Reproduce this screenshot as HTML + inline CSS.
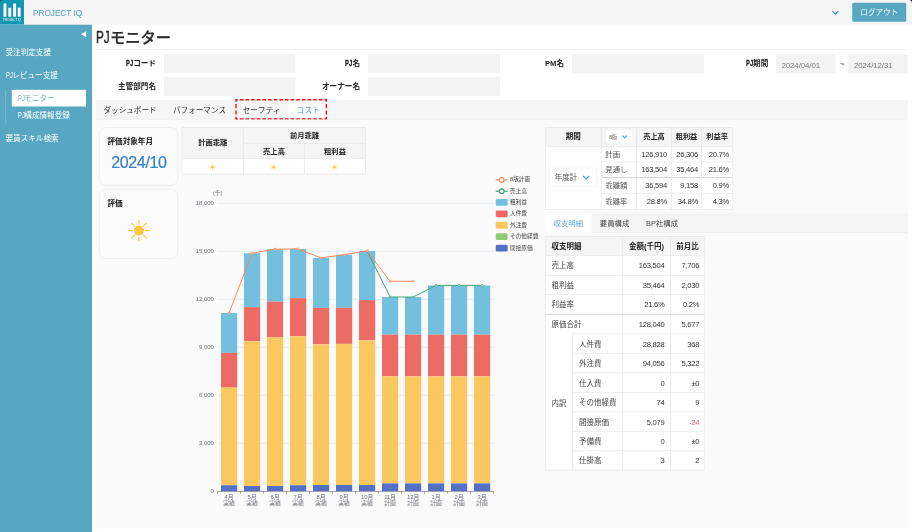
<!DOCTYPE html>
<html lang="ja"><head><meta charset="utf-8"><title>PJモニター</title>
<style>
html,body{margin:0;padding:0;background:#fff;}
body{width:912px;height:532px;position:relative;overflow:hidden;font-family:"Liberation Sans", "Noto Sans CJK JP", sans-serif;}
svg.bg{position:absolute;left:0;top:0;display:block;font-family:"Liberation Sans", "Noto Sans CJK JP", sans-serif;will-change:transform;}
#tx{position:absolute;left:0;top:0;width:912px;height:532px;will-change:transform;}
.t{position:absolute;white-space:nowrap;margin:0;}
.b .pj{-webkit-text-stroke:0.3px currentColor;}
.pj{display:inline-block;line-height:0;font-size:1.1em;transform:scaleX(0.7);transform-origin:0 50%;margin-right:-0.35em;}
</style></head><body>
<svg class="bg" width="912" height="532" viewBox="0 0 912 532">
<rect x="0" y="0" width="912" height="24.7" fill="#f5f5f5"/>
<rect x="0" y="0" width="24" height="24.7" fill="#1396b3"/>
<path d="M0 0 L2.4 0 A2.4 2.4 0 0 0 0 2.4 Z" fill="#333"/>
<rect x="3.5" y="3.5" width="2.9" height="13.2" fill="#fff"/>
<rect x="8.3" y="7.7" width="2.9" height="9" fill="#fff"/>
<rect x="13.2" y="3.5" width="2.9" height="13.2" fill="#fff"/>
<rect x="17.8" y="7.7" width="2.8" height="9" fill="#fff"/>
<text x="12.1" y="20.6" font-size="2.95" fill="#fff" text-anchor="middle">PROJECT IQ</text>
<path d="M832.3 11.1 L835.3 14.1 L838.3 11.1" fill="none" stroke="#3a9fd0" stroke-width="1.1"/>
<rect x="852.25" y="2.7" width="54.0" height="19.05" fill="#57a7c2" rx="1.5"/>
<path d="M908.8 0 L912 0 L912 3.4 A3.4 3.4 0 0 0 908.8 0 Z" fill="#2a2a2a"/>
<rect x="0" y="24.7" width="92" height="507.3" fill="#57a7c2"/>
<path d="M86.2 31.3 L86.2 37 L81 34.2 Z" fill="#fff"/>
<rect x="5.5" y="89.8" width="0.6" height="33.7" fill="#8fc3d8"/>
<rect x="11.8" y="89.8" width="74.2" height="16.7" fill="#fff"/>
<rect x="96" y="49.2" width="811.75" height="0.7" fill="#ececec"/>
<rect x="164" y="54.2" width="131.5" height="19.0" fill="#f3f3f3" rx="1.5"/>
<rect x="164" y="77.2" width="131.5" height="18.8" fill="#f3f3f3" rx="1.5"/>
<rect x="368" y="54.2" width="132" height="19.0" fill="#f3f3f3" rx="1.5"/>
<rect x="368" y="77.2" width="132" height="18.8" fill="#f3f3f3" rx="1.5"/>
<rect x="572" y="54.2" width="132" height="19.0" fill="#f3f3f3" rx="1.5"/>
<rect x="776" y="54.2" width="59.5" height="19.0" fill="#f3f3f3" rx="1.5"/>
<rect x="848.25" y="54.2" width="59.5" height="19.0" fill="#f3f3f3" rx="1.5"/>
<rect x="96" y="99.9" width="811.75" height="19.6" fill="#f5f5f5"/>
<rect x="96" y="119.2" width="811.75" height="0.6" fill="#e9e9e9"/>
<rect x="288.4" y="100.1" width="38.1" height="19.4" fill="#fff"/>
<path d="M236.0 99.75 L326.3 99.75" stroke="#ff0505" stroke-width="1.35" stroke-dasharray="3.556 2.088" stroke-dashoffset="1.778" fill="none"/>
<path d="M236.0 118.8 L326.3 118.8" stroke="#ff0505" stroke-width="1.35" stroke-dasharray="3.556 2.088" stroke-dashoffset="1.778" fill="none"/>
<path d="M236.0 99.75 L236.0 118.8" stroke="#ff0505" stroke-width="1.35" stroke-dasharray="4.064 2.286" stroke-dashoffset="2.032" fill="none"/>
<path d="M326.3 99.75 L326.3 118.8" stroke="#ff0505" stroke-width="1.35" stroke-dasharray="4.064 2.286" stroke-dashoffset="2.032" fill="none"/>
<rect x="235.32" y="99.08" width="1.35" height="1.35" fill="#ff0505"/>
<rect x="325.62" y="99.08" width="1.35" height="1.35" fill="#ff0505"/>
<rect x="235.32" y="118.12" width="1.35" height="1.35" fill="#ff0505"/>
<rect x="325.62" y="118.12" width="1.35" height="1.35" fill="#ff0505"/>
<rect x="96" y="119.8" width="811.75" height="407.95" fill="#fafafa"/>
<rect x="99.3" y="127.5" width="78.4" height="57.8" fill="#fbfbfb" rx="6.5" stroke="#e9e9e9" stroke-width="0.7"/>
<rect x="99.3" y="189.4" width="78.4" height="69.2" fill="#fbfbfb" rx="6.5" stroke="#e9e9e9" stroke-width="0.7"/>
<circle cx="138.9" cy="230.6" r="5" fill="#fcc743"/><line x1="145.30" y1="230.60" x2="149.10" y2="230.60" stroke="#fcc743" stroke-width="1.15" stroke-linecap="round"/><line x1="143.43" y1="235.13" x2="146.11" y2="237.81" stroke="#fcc743" stroke-width="1.15" stroke-linecap="round"/><line x1="138.90" y1="237.00" x2="138.90" y2="240.80" stroke="#fcc743" stroke-width="1.15" stroke-linecap="round"/><line x1="134.37" y1="235.13" x2="131.69" y2="237.81" stroke="#fcc743" stroke-width="1.15" stroke-linecap="round"/><line x1="132.50" y1="230.60" x2="128.70" y2="230.60" stroke="#fcc743" stroke-width="1.15" stroke-linecap="round"/><line x1="134.37" y1="226.07" x2="131.69" y2="223.39" stroke="#fcc743" stroke-width="1.15" stroke-linecap="round"/><line x1="138.90" y1="224.20" x2="138.90" y2="220.40" stroke="#fcc743" stroke-width="1.15" stroke-linecap="round"/><line x1="143.43" y1="226.07" x2="146.11" y2="223.39" stroke="#fcc743" stroke-width="1.15" stroke-linecap="round"/>
<rect x="182" y="127.5" width="183.5" height="31.25" fill="#f5f5f5"/>
<rect x="182" y="158.75" width="183.5" height="15.35" fill="#fff"/>
<rect x="182" y="127.15" width="183.5" height="0.7" fill="#e6e6e6"/>
<rect x="243.5" y="142.9" width="122.0" height="0.7" fill="#e6e6e6"/>
<rect x="182" y="158.4" width="183.5" height="0.7" fill="#e6e6e6"/>
<rect x="182" y="173.75" width="183.5" height="0.7" fill="#e6e6e6"/>
<rect x="181.65" y="127.5" width="0.7" height="46.6" fill="#e6e6e6"/>
<rect x="243.15" y="127.5" width="0.7" height="46.6" fill="#e6e6e6"/>
<rect x="304.15" y="143.25" width="0.7" height="30.85" fill="#e6e6e6"/>
<rect x="365.15" y="127.5" width="0.7" height="46.6" fill="#e6e6e6"/>
<circle cx="212.6" cy="167.0" r="1.6" fill="#fdc94f"/><line x1="214.80" y1="167.00" x2="215.90" y2="167.00" stroke="#fdc94f" stroke-width="0.5" stroke-linecap="round"/><line x1="214.16" y1="168.56" x2="214.93" y2="169.33" stroke="#fdc94f" stroke-width="0.5" stroke-linecap="round"/><line x1="212.60" y1="169.20" x2="212.60" y2="170.30" stroke="#fdc94f" stroke-width="0.5" stroke-linecap="round"/><line x1="211.04" y1="168.56" x2="210.27" y2="169.33" stroke="#fdc94f" stroke-width="0.5" stroke-linecap="round"/><line x1="210.40" y1="167.00" x2="209.30" y2="167.00" stroke="#fdc94f" stroke-width="0.5" stroke-linecap="round"/><line x1="211.04" y1="165.44" x2="210.27" y2="164.67" stroke="#fdc94f" stroke-width="0.5" stroke-linecap="round"/><line x1="212.60" y1="164.80" x2="212.60" y2="163.70" stroke="#fdc94f" stroke-width="0.5" stroke-linecap="round"/><line x1="214.16" y1="165.44" x2="214.93" y2="164.67" stroke="#fdc94f" stroke-width="0.5" stroke-linecap="round"/>
<circle cx="273.6" cy="167.0" r="1.6" fill="#fdc94f"/><line x1="275.80" y1="167.00" x2="276.90" y2="167.00" stroke="#fdc94f" stroke-width="0.5" stroke-linecap="round"/><line x1="275.16" y1="168.56" x2="275.93" y2="169.33" stroke="#fdc94f" stroke-width="0.5" stroke-linecap="round"/><line x1="273.60" y1="169.20" x2="273.60" y2="170.30" stroke="#fdc94f" stroke-width="0.5" stroke-linecap="round"/><line x1="272.04" y1="168.56" x2="271.27" y2="169.33" stroke="#fdc94f" stroke-width="0.5" stroke-linecap="round"/><line x1="271.40" y1="167.00" x2="270.30" y2="167.00" stroke="#fdc94f" stroke-width="0.5" stroke-linecap="round"/><line x1="272.04" y1="165.44" x2="271.27" y2="164.67" stroke="#fdc94f" stroke-width="0.5" stroke-linecap="round"/><line x1="273.60" y1="164.80" x2="273.60" y2="163.70" stroke="#fdc94f" stroke-width="0.5" stroke-linecap="round"/><line x1="275.16" y1="165.44" x2="275.93" y2="164.67" stroke="#fdc94f" stroke-width="0.5" stroke-linecap="round"/>
<circle cx="334.6" cy="167.0" r="1.6" fill="#fdc94f"/><line x1="336.80" y1="167.00" x2="337.90" y2="167.00" stroke="#fdc94f" stroke-width="0.5" stroke-linecap="round"/><line x1="336.16" y1="168.56" x2="336.93" y2="169.33" stroke="#fdc94f" stroke-width="0.5" stroke-linecap="round"/><line x1="334.60" y1="169.20" x2="334.60" y2="170.30" stroke="#fdc94f" stroke-width="0.5" stroke-linecap="round"/><line x1="333.04" y1="168.56" x2="332.27" y2="169.33" stroke="#fdc94f" stroke-width="0.5" stroke-linecap="round"/><line x1="332.40" y1="167.00" x2="331.30" y2="167.00" stroke="#fdc94f" stroke-width="0.5" stroke-linecap="round"/><line x1="333.04" y1="165.44" x2="332.27" y2="164.67" stroke="#fdc94f" stroke-width="0.5" stroke-linecap="round"/><line x1="334.60" y1="164.80" x2="334.60" y2="163.70" stroke="#fdc94f" stroke-width="0.5" stroke-linecap="round"/><line x1="336.16" y1="165.44" x2="336.93" y2="164.67" stroke="#fdc94f" stroke-width="0.5" stroke-linecap="round"/>
<rect x="218" y="442.90" width="275.5" height="0.7" fill="#e3e7f1"/><rect x="218" y="394.90" width="275.5" height="0.7" fill="#e3e7f1"/><rect x="218" y="346.90" width="275.5" height="0.7" fill="#e3e7f1"/><rect x="218" y="298.90" width="275.5" height="0.7" fill="#e3e7f1"/><rect x="218" y="250.90" width="275.5" height="0.7" fill="#e3e7f1"/><rect x="218" y="202.90" width="275.5" height="0.7" fill="#e3e7f1"/><text x="213.8" y="493.35" font-size="5.9" fill="#6e7079" text-anchor="end">0</text><text x="213.8" y="445.35" font-size="5.9" fill="#6e7079" text-anchor="end">3,000</text><text x="213.8" y="397.35" font-size="5.9" fill="#6e7079" text-anchor="end">6,000</text><text x="213.8" y="349.35" font-size="5.9" fill="#6e7079" text-anchor="end">9,000</text><text x="213.8" y="301.35" font-size="5.9" fill="#6e7079" text-anchor="end">12,000</text><text x="213.8" y="253.35" font-size="5.9" fill="#6e7079" text-anchor="end">15,000</text><text x="213.8" y="205.35" font-size="5.9" fill="#6e7079" text-anchor="end">18,000</text><text x="217.7" y="194.5" font-size="5.6" fill="#6e7079" text-anchor="middle">(千)</text><rect x="221.00" y="313.00" width="16.2" height="39.90" fill="#73bfdd"/><rect x="221.00" y="352.90" width="16.2" height="34.70" fill="#ec6b65"/><rect x="221.00" y="387.60" width="16.2" height="97.65" fill="#fac85e"/><rect x="221.00" y="485.25" width="16.2" height="6.00" fill="#5470c6"/><rect x="244.00" y="253.25" width="16.2" height="53.90" fill="#73bfdd"/><rect x="244.00" y="307.15" width="16.2" height="34.20" fill="#ec6b65"/><rect x="244.00" y="341.35" width="16.2" height="144.65" fill="#fac85e"/><rect x="244.00" y="486.00" width="16.2" height="5.25" fill="#5470c6"/><rect x="267.00" y="249.25" width="16.2" height="52.40" fill="#73bfdd"/><rect x="267.00" y="301.65" width="16.2" height="35.70" fill="#ec6b65"/><rect x="267.00" y="337.35" width="16.2" height="148.65" fill="#fac85e"/><rect x="267.00" y="486.00" width="16.2" height="5.25" fill="#5470c6"/><rect x="290.00" y="249.00" width="16.2" height="49.15" fill="#73bfdd"/><rect x="290.00" y="298.15" width="16.2" height="38.20" fill="#ec6b65"/><rect x="290.00" y="336.35" width="16.2" height="148.90" fill="#fac85e"/><rect x="290.00" y="485.25" width="16.2" height="6.00" fill="#5470c6"/><rect x="313.00" y="258.00" width="16.2" height="49.90" fill="#73bfdd"/><rect x="313.00" y="307.90" width="16.2" height="36.45" fill="#ec6b65"/><rect x="313.00" y="344.35" width="16.2" height="140.65" fill="#fac85e"/><rect x="313.00" y="485.00" width="16.2" height="6.25" fill="#5470c6"/><rect x="336.00" y="254.75" width="16.2" height="53.15" fill="#73bfdd"/><rect x="336.00" y="307.90" width="16.2" height="35.95" fill="#ec6b65"/><rect x="336.00" y="343.85" width="16.2" height="141.15" fill="#fac85e"/><rect x="336.00" y="485.00" width="16.2" height="6.25" fill="#5470c6"/><rect x="359.00" y="251.00" width="16.2" height="49.15" fill="#73bfdd"/><rect x="359.00" y="300.15" width="16.2" height="40.20" fill="#ec6b65"/><rect x="359.00" y="340.35" width="16.2" height="144.65" fill="#fac85e"/><rect x="359.00" y="485.00" width="16.2" height="6.25" fill="#5470c6"/><rect x="382.00" y="297.00" width="16.2" height="37.65" fill="#73bfdd"/><rect x="382.00" y="334.65" width="16.2" height="41.70" fill="#ec6b65"/><rect x="382.00" y="376.35" width="16.2" height="107.05" fill="#fac85e"/><rect x="382.00" y="483.40" width="16.2" height="7.85" fill="#5470c6"/><rect x="405.00" y="297.00" width="16.2" height="37.65" fill="#73bfdd"/><rect x="405.00" y="334.65" width="16.2" height="41.70" fill="#ec6b65"/><rect x="405.00" y="376.35" width="16.2" height="107.05" fill="#fac85e"/><rect x="405.00" y="483.40" width="16.2" height="7.85" fill="#5470c6"/><rect x="428.00" y="285.50" width="16.2" height="49.15" fill="#73bfdd"/><rect x="428.00" y="334.65" width="16.2" height="41.70" fill="#ec6b65"/><rect x="428.00" y="376.35" width="16.2" height="107.05" fill="#fac85e"/><rect x="428.00" y="483.40" width="16.2" height="7.85" fill="#5470c6"/><rect x="451.00" y="285.50" width="16.2" height="49.15" fill="#73bfdd"/><rect x="451.00" y="334.65" width="16.2" height="41.70" fill="#ec6b65"/><rect x="451.00" y="376.35" width="16.2" height="107.05" fill="#fac85e"/><rect x="451.00" y="483.40" width="16.2" height="7.85" fill="#5470c6"/><rect x="474.00" y="285.50" width="16.2" height="49.15" fill="#73bfdd"/><rect x="474.00" y="334.65" width="16.2" height="41.70" fill="#ec6b65"/><rect x="474.00" y="376.35" width="16.2" height="107.05" fill="#fac85e"/><rect x="474.00" y="483.40" width="16.2" height="7.85" fill="#5470c6"/><rect x="217.3" y="491.20" width="276.5" height="0.6" fill="#777983"/><rect x="217.30" y="491.25" width="0.6" height="2.6" fill="#777983"/><rect x="240.30" y="491.25" width="0.6" height="2.6" fill="#777983"/><rect x="263.30" y="491.25" width="0.6" height="2.6" fill="#777983"/><rect x="286.30" y="491.25" width="0.6" height="2.6" fill="#777983"/><rect x="309.30" y="491.25" width="0.6" height="2.6" fill="#777983"/><rect x="332.30" y="491.25" width="0.6" height="2.6" fill="#777983"/><rect x="355.30" y="491.25" width="0.6" height="2.6" fill="#777983"/><rect x="378.30" y="491.25" width="0.6" height="2.6" fill="#777983"/><rect x="401.30" y="491.25" width="0.6" height="2.6" fill="#777983"/><rect x="424.30" y="491.25" width="0.6" height="2.6" fill="#777983"/><rect x="447.30" y="491.25" width="0.6" height="2.6" fill="#777983"/><rect x="470.30" y="491.25" width="0.6" height="2.6" fill="#777983"/><rect x="493.30" y="491.25" width="0.6" height="2.6" fill="#777983"/><text x="229.10" y="499.0" font-size="5.8" fill="#6e7079" text-anchor="middle">4月</text><text x="229.10" y="505.0" font-size="5.8" fill="#6e7079" text-anchor="middle">実績</text><text x="252.10" y="499.0" font-size="5.8" fill="#6e7079" text-anchor="middle">5月</text><text x="252.10" y="505.0" font-size="5.8" fill="#6e7079" text-anchor="middle">実績</text><text x="275.10" y="499.0" font-size="5.8" fill="#6e7079" text-anchor="middle">6月</text><text x="275.10" y="505.0" font-size="5.8" fill="#6e7079" text-anchor="middle">実績</text><text x="298.10" y="499.0" font-size="5.8" fill="#6e7079" text-anchor="middle">7月</text><text x="298.10" y="505.0" font-size="5.8" fill="#6e7079" text-anchor="middle">実績</text><text x="321.10" y="499.0" font-size="5.8" fill="#6e7079" text-anchor="middle">8月</text><text x="321.10" y="505.0" font-size="5.8" fill="#6e7079" text-anchor="middle">実績</text><text x="344.10" y="499.0" font-size="5.8" fill="#6e7079" text-anchor="middle">9月</text><text x="344.10" y="505.0" font-size="5.8" fill="#6e7079" text-anchor="middle">実績</text><text x="367.10" y="499.0" font-size="5.8" fill="#6e7079" text-anchor="middle">10月</text><text x="367.10" y="505.0" font-size="5.8" fill="#6e7079" text-anchor="middle">実績</text><text x="390.10" y="499.0" font-size="5.8" fill="#6e7079" text-anchor="middle">11月</text><text x="390.10" y="505.0" font-size="5.8" fill="#6e7079" text-anchor="middle">計画</text><text x="413.10" y="499.0" font-size="5.8" fill="#6e7079" text-anchor="middle">12月</text><text x="413.10" y="505.0" font-size="5.8" fill="#6e7079" text-anchor="middle">計画</text><text x="436.10" y="499.0" font-size="5.8" fill="#6e7079" text-anchor="middle">1月</text><text x="436.10" y="505.0" font-size="5.8" fill="#6e7079" text-anchor="middle">計画</text><text x="459.10" y="499.0" font-size="5.8" fill="#6e7079" text-anchor="middle">2月</text><text x="459.10" y="505.0" font-size="5.8" fill="#6e7079" text-anchor="middle">計画</text><text x="482.10" y="499.0" font-size="5.8" fill="#6e7079" text-anchor="middle">3月</text><text x="482.10" y="505.0" font-size="5.8" fill="#6e7079" text-anchor="middle">計画</text><path d="M367.10 250.9 L390.10 297.0 L413.10 297.0 L436.10 285.4 L459.10 285.4 L482.10 285.4" fill="none" stroke="#3ba272" stroke-width="0.95" stroke-linejoin="round"/><circle cx="367.10" cy="250.9" r="0.95" fill="#fff" stroke="#3ba272" stroke-width="0.75"/><circle cx="390.10" cy="297.0" r="0.95" fill="#fff" stroke="#3ba272" stroke-width="0.75"/><circle cx="413.10" cy="297.0" r="0.95" fill="#fff" stroke="#3ba272" stroke-width="0.75"/><circle cx="436.10" cy="285.4" r="0.95" fill="#fff" stroke="#3ba272" stroke-width="0.75"/><circle cx="459.10" cy="285.4" r="0.95" fill="#fff" stroke="#3ba272" stroke-width="0.75"/><circle cx="482.10" cy="285.4" r="0.95" fill="#fff" stroke="#3ba272" stroke-width="0.75"/><path d="M229.10 312.9 L252.10 253.25 L275.10 249.1 L298.10 248.9 L321.10 257.9 L344.10 254.7 L367.10 250.9 L390.10 281.25 L413.10 281.25" fill="none" stroke="#fc8452" stroke-width="0.95" stroke-linejoin="round"/><circle cx="229.10" cy="312.9" r="0.95" fill="#fff" stroke="#fc8452" stroke-width="0.75"/><circle cx="252.10" cy="253.25" r="0.95" fill="#fff" stroke="#fc8452" stroke-width="0.75"/><circle cx="275.10" cy="249.1" r="0.95" fill="#fff" stroke="#fc8452" stroke-width="0.75"/><circle cx="298.10" cy="248.9" r="0.95" fill="#fff" stroke="#fc8452" stroke-width="0.75"/><circle cx="321.10" cy="257.9" r="0.95" fill="#fff" stroke="#fc8452" stroke-width="0.75"/><circle cx="344.10" cy="254.7" r="0.95" fill="#fff" stroke="#fc8452" stroke-width="0.75"/><circle cx="367.10" cy="250.9" r="0.95" fill="#fff" stroke="#fc8452" stroke-width="0.75"/><circle cx="390.10" cy="281.25" r="0.95" fill="#fff" stroke="#fc8452" stroke-width="0.75"/><circle cx="413.10" cy="281.25" r="0.95" fill="#fff" stroke="#fc8452" stroke-width="0.75"/><line x1="495.75" y1="179.9" x2="507.6" y2="179.9" stroke="#fc8452" stroke-width="1.15"/><circle cx="501.7" cy="179.9" r="2.35" fill="#fafafa" stroke="#fc8452" stroke-width="1.1"/><text x="510" y="181.40" font-size="5.7" fill="#444">8版計画</text><line x1="495.75" y1="191.2" x2="507.6" y2="191.2" stroke="#3ba272" stroke-width="1.15"/><circle cx="501.7" cy="191.2" r="2.35" fill="#fafafa" stroke="#3ba272" stroke-width="1.1"/><text x="510" y="192.70" font-size="5.7" fill="#444">売上高</text><rect x="495.75" y="199.00" width="11.9" height="6.8" rx="1.4" fill="#73c0de"/><text x="510" y="203.90" font-size="5.7" fill="#444">粗利益</text><rect x="495.75" y="210.45" width="11.9" height="6.8" rx="1.4" fill="#ee6666"/><text x="510" y="215.35" font-size="5.7" fill="#444">人件費</text><rect x="495.75" y="221.85" width="11.9" height="6.8" rx="1.4" fill="#fac858"/><text x="510" y="226.75" font-size="5.7" fill="#444">外注費</text><rect x="495.75" y="233.30" width="11.9" height="6.8" rx="1.4" fill="#91cc75"/><text x="510" y="238.20" font-size="5.7" fill="#444">その他経費</text><rect x="495.75" y="244.80" width="11.9" height="6.8" rx="1.4" fill="#5470c6"/><text x="510" y="249.70" font-size="5.7" fill="#444">間接原価</text>
<rect x="545.25" y="127.5" width="187.5" height="19.25" fill="#f5f5f5"/>
<rect x="545.25" y="146.75" width="187.5" height="62.5" fill="#fff"/>
<rect x="545.25" y="127.15" width="187.5" height="0.7" fill="#e6e6e6"/>
<rect x="545.25" y="146.4" width="187.5" height="0.7" fill="#e6e6e6"/>
<rect x="601.25" y="161.55" width="131.5" height="0.7" fill="#e6e6e6"/>
<rect x="601.25" y="177.15" width="131.5" height="0.9" fill="#cfcfcf"/>
<rect x="601.25" y="193.05" width="131.5" height="0.7" fill="#e6e6e6"/>
<rect x="545.25" y="208.9" width="187.5" height="0.7" fill="#e6e6e6"/>
<rect x="544.9" y="127.5" width="0.7" height="81.75" fill="#e6e6e6"/>
<rect x="600.9" y="127.5" width="0.7" height="81.75" fill="#e6e6e6"/>
<rect x="636.15" y="127.5" width="0.7" height="81.75" fill="#e6e6e6"/>
<rect x="671.15" y="127.5" width="0.7" height="81.75" fill="#e6e6e6"/>
<rect x="701.15" y="127.5" width="0.7" height="81.75" fill="#e6e6e6"/>
<rect x="732.4" y="127.5" width="0.7" height="81.75" fill="#e6e6e6"/>
<rect x="605.9" y="130" width="26.4" height="13.1" fill="#fff" rx="1"/>
<path d="M622.6 135.6 L624.7 137.79999999999998 L626.8000000000001 135.6" fill="none" stroke="#3a9fd0" stroke-width="1.1"/>
<rect x="549.25" y="168" width="47.5" height="18.5" fill="#fff" rx="1" stroke="#eeeeee" stroke-width="0.6"/>
<path d="M583.1 176.0 L586.1 179.0 L589.1 176.0" fill="none" stroke="#3a9fd0" stroke-width="1.2"/>
<rect x="545.25" y="213.25" width="362.5" height="19.25" fill="#f5f5f5"/>
<rect x="545.25" y="232.2" width="362.5" height="0.6" fill="#e9e9e9"/>
<rect x="545.25" y="213.25" width="46.25" height="19.55" fill="#fff"/>
<rect x="545.25" y="236.5" width="159.5" height="19.25" fill="#f5f5f5"/>
<rect x="545.25" y="255.75" width="159.5" height="214.25" fill="#fff"/>
<rect x="545.25" y="236.15" width="159.5" height="0.7" fill="#e6e6e6"/>
<rect x="545.25" y="255.4" width="159.5" height="0.7" fill="#e6e6e6"/>
<rect x="545.25" y="274.9" width="159.5" height="0.7" fill="#e6e6e6"/>
<rect x="545.25" y="294.25" width="159.5" height="0.7" fill="#e6e6e6"/>
<rect x="545.25" y="313.8" width="159.5" height="0.9" fill="#cfcfcf"/>
<rect x="572.75" y="333.55" width="132.0" height="0.7" fill="#e6e6e6"/>
<rect x="572.75" y="352.95" width="132.0" height="0.7" fill="#e6e6e6"/>
<rect x="572.75" y="372.55" width="132.0" height="0.7" fill="#e6e6e6"/>
<rect x="572.75" y="392.05" width="132.0" height="0.7" fill="#e6e6e6"/>
<rect x="572.75" y="411.55" width="132.0" height="0.7" fill="#e6e6e6"/>
<rect x="572.75" y="430.95" width="132.0" height="0.7" fill="#e6e6e6"/>
<rect x="572.75" y="450.45" width="132.0" height="0.7" fill="#e6e6e6"/>
<rect x="545.25" y="469.65" width="159.5" height="0.7" fill="#e6e6e6"/>
<rect x="544.9" y="236.5" width="0.7" height="233.5" fill="#e6e6e6"/>
<rect x="622.4" y="236.5" width="0.7" height="233.5" fill="#e6e6e6"/>
<rect x="670.15" y="236.5" width="0.7" height="233.5" fill="#e6e6e6"/>
<rect x="704.4" y="236.5" width="0.7" height="233.5" fill="#e6e6e6"/>
<rect x="572.4" y="333.9" width="0.7" height="136.1" fill="#e6e6e6"/>
</svg>
<div id="tx">
<div class="t" style="top:6.17px;font-size:9.4px;line-height:13.16px;color:#4b9fc1;left:33.0px;transform:scaleX(0.875);transform-origin:0 50%;">PROJECT IQ</div>
<div class="t" style="top:8.42px;font-size:7.6px;line-height:10.64px;color:#fff;left:729.3px;width:300px;text-align:center;">ログアウト</div>
<div class="t" style="top:48.32px;font-size:7.6px;line-height:10.64px;color:#fff;left:5.5px;">受注判定支援</div>
<div class="t" style="top:71.32px;font-size:7.6px;line-height:10.64px;color:#fff;left:5.5px;"><span class="pj">PJ</span>レビュー支援</div>
<div class="t" style="top:94.32px;font-size:7.6px;line-height:10.64px;color:#6aaecb;left:17.5px;"><span class="pj">PJ</span>モニター</div>
<div class="t" style="top:111.22px;font-size:7.6px;line-height:10.64px;color:#fff;left:17.5px;"><span class="pj">PJ</span>構成情報登録</div>
<div class="t" style="top:134.42px;font-size:7.6px;line-height:10.64px;color:#fff;left:5.5px;">要員スキル検索</div>
<div class="t" style="top:26.59px;font-size:15.3px;line-height:21.42px;color:#2a2a2a;left:96.2px;font-weight:500;-webkit-text-stroke:0.25px #2a2a2a;"><span class="pj" style="-webkit-text-stroke:0.45px #2a2a2a;">PJ</span>モニター</div>
<div class="t b" style="top:59.37px;font-size:7.6px;line-height:10.64px;color:#222;font-weight:bold;left:-144px;width:300px;text-align:right;"><span class="pj">PJ</span>コード</div>
<div class="t b" style="top:82.37px;font-size:7.6px;line-height:10.64px;color:#222;font-weight:bold;left:-144px;width:300px;text-align:right;">主管部門名</div>
<div class="t b" style="top:59.37px;font-size:7.6px;line-height:10.64px;color:#222;font-weight:bold;left:60px;width:300px;text-align:right;"><span class="pj">PJ</span>名</div>
<div class="t b" style="top:82.37px;font-size:7.6px;line-height:10.64px;color:#222;font-weight:bold;left:60px;width:300px;text-align:right;">オーナー名</div>
<div class="t b" style="top:59.37px;font-size:7.6px;line-height:10.64px;color:#222;font-weight:bold;left:545px;">PM名</div>
<div class="t b" style="top:59.37px;font-size:7.6px;line-height:10.64px;color:#222;font-weight:bold;left:745.75px;"><span class="pj">PJ</span>期間</div>
<div class="t" style="top:59.57px;font-size:7.9px;line-height:11.06px;color:#7a7a7a;left:781.5px;letter-spacing:-0.1px;">2024/04/01</div>
<div class="t" style="top:58.95px;font-size:8.5px;line-height:11.9px;color:#666;left:692px;width:300px;text-align:center;">~</div>
<div class="t" style="top:59.57px;font-size:7.9px;line-height:11.06px;color:#7a7a7a;left:854px;letter-spacing:-0.1px;">2024/12/31</div>
<div class="t" style="top:105.87px;font-size:7.6px;line-height:10.64px;color:#333;left:103.5px;">ダッシュボード</div>
<div class="t" style="top:105.87px;font-size:7.6px;line-height:10.64px;color:#333;left:173px;">パフォーマンス</div>
<div class="t" style="top:105.62px;font-size:7.8px;line-height:10.92px;color:#333;left:242.5px;">セーフティ</div>
<div class="t" style="top:105.62px;font-size:7.8px;line-height:10.92px;color:#4a9fc8;left:296.6px;">コスト</div>
<div class="t b" style="top:136.72px;font-size:7.6px;line-height:10.64px;color:#222;font-weight:bold;left:107.5px;">評価対象年月</div>
<div class="t" style="top:152.3px;font-size:16px;line-height:22.4px;color:#3480cf;left:-11.1px;width:300px;text-align:center;letter-spacing:-0.35px;-webkit-text-stroke:0.2px #3480cf;">2024/10</div>
<div class="t b" style="top:198.82px;font-size:7.6px;line-height:10.64px;color:#222;font-weight:bold;left:107.5px;">評価</div>
<div class="t b" style="top:138.48px;font-size:7.3px;line-height:10.22px;color:#222;font-weight:bold;left:62.75px;width:300px;text-align:center;">計画乖離</div>
<div class="t b" style="top:130.68px;font-size:7.3px;line-height:10.22px;color:#222;font-weight:bold;left:154.5px;width:300px;text-align:center;">前月乖離</div>
<div class="t b" style="top:146.88px;font-size:7.3px;line-height:10.22px;color:#222;font-weight:bold;left:124px;width:300px;text-align:center;">売上高</div>
<div class="t b" style="top:146.88px;font-size:7.3px;line-height:10.22px;color:#222;font-weight:bold;left:185px;width:300px;text-align:center;">粗利益</div>
<div class="t b" style="top:132.12px;font-size:7.6px;line-height:10.64px;color:#222;font-weight:bold;left:423.25px;width:300px;text-align:center;">期間</div>
<div class="t" style="top:133.85px;font-size:5.2px;line-height:7.28px;color:#666;left:609.2px;">8版</div>
<div class="t b" style="top:132.33px;font-size:7.2px;line-height:10.08px;color:#222;font-weight:bold;left:504.0px;width:300px;text-align:center;">売上高</div>
<div class="t b" style="top:132.33px;font-size:7.2px;line-height:10.08px;color:#222;font-weight:bold;left:536.5px;width:300px;text-align:center;">粗利益</div>
<div class="t b" style="top:132.33px;font-size:7.2px;line-height:10.08px;color:#222;font-weight:bold;left:567.12px;width:300px;text-align:center;">利益率</div>
<div class="t" style="top:149.55px;font-size:7.4px;line-height:10.36px;color:#555;left:605.25px;">計画</div>
<div class="t" style="top:149.71px;font-size:7.6px;line-height:10.64px;color:#333;left:367.1px;width:300px;text-align:right;letter-spacing:-0.22px;">126,910</div>
<div class="t" style="top:149.71px;font-size:7.6px;line-height:10.64px;color:#333;left:398.1px;width:300px;text-align:right;letter-spacing:-0.22px;">26,306</div>
<div class="t" style="top:149.71px;font-size:7.6px;line-height:10.64px;color:#333;left:429.1px;width:300px;text-align:right;letter-spacing:-0.22px;">20.7%</div>
<div class="t" style="top:164.98px;font-size:7.4px;line-height:10.36px;color:#555;left:605.25px;">見通し</div>
<div class="t" style="top:165.13px;font-size:7.6px;line-height:10.64px;color:#333;left:367.1px;width:300px;text-align:right;letter-spacing:-0.22px;">163,504</div>
<div class="t" style="top:165.13px;font-size:7.6px;line-height:10.64px;color:#333;left:398.1px;width:300px;text-align:right;letter-spacing:-0.22px;">35,464</div>
<div class="t" style="top:165.13px;font-size:7.6px;line-height:10.64px;color:#333;left:429.1px;width:300px;text-align:right;letter-spacing:-0.22px;">21.6%</div>
<div class="t" style="top:180.73px;font-size:7.4px;line-height:10.36px;color:#555;left:605.25px;">乖離額</div>
<div class="t" style="top:180.88px;font-size:7.6px;line-height:10.64px;color:#333;left:367.1px;width:300px;text-align:right;letter-spacing:-0.22px;">36,594</div>
<div class="t" style="top:180.88px;font-size:7.6px;line-height:10.64px;color:#333;left:398.1px;width:300px;text-align:right;letter-spacing:-0.22px;">9,158</div>
<div class="t" style="top:180.88px;font-size:7.6px;line-height:10.64px;color:#333;left:429.1px;width:300px;text-align:right;letter-spacing:-0.22px;">0.9%</div>
<div class="t" style="top:196.55px;font-size:7.4px;line-height:10.36px;color:#555;left:605.25px;">乖離率</div>
<div class="t" style="top:196.71px;font-size:7.6px;line-height:10.64px;color:#333;left:367.1px;width:300px;text-align:right;letter-spacing:-0.22px;">28.8%</div>
<div class="t" style="top:196.71px;font-size:7.6px;line-height:10.64px;color:#333;left:398.1px;width:300px;text-align:right;letter-spacing:-0.22px;">34.8%</div>
<div class="t" style="top:196.71px;font-size:7.6px;line-height:10.64px;color:#333;left:429.1px;width:300px;text-align:right;letter-spacing:-0.22px;">4.3%</div>
<div class="t" style="top:172.58px;font-size:7.5px;line-height:10.5px;color:#555;left:554.8px;">年度計</div>
<div class="t" style="top:218.63px;font-size:7.4px;line-height:10.36px;color:#5ba5d3;left:553.5px;">収支明細</div>
<div class="t" style="top:218.63px;font-size:7.4px;line-height:10.36px;color:#444;left:599.75px;">要員構成</div>
<div class="t" style="top:218.63px;font-size:7.4px;line-height:10.36px;color:#444;left:646px;">BP社構成</div>
<div class="t b" style="top:242.3px;font-size:7.5px;line-height:10.5px;color:#222;font-weight:bold;left:551.5px;">収支明細</div>
<div class="t b" style="top:242.3px;font-size:7.5px;line-height:10.5px;color:#222;font-weight:bold;left:496.62px;width:300px;text-align:center;">金額(千円)</div>
<div class="t b" style="top:242.3px;font-size:7.5px;line-height:10.5px;color:#222;font-weight:bold;left:537.62px;width:300px;text-align:center;">前月比</div>
<div class="t" style="top:261.48px;font-size:7.5px;line-height:10.5px;color:#444;left:551.5px;">売上高</div>
<div class="t" style="top:261.48px;font-size:7.6px;line-height:10.64px;color:#333;left:364.6px;width:300px;text-align:right;letter-spacing:-0.22px;">163,504</div>
<div class="t" style="top:261.48px;font-size:7.6px;line-height:10.64px;color:#333;left:399.35px;width:300px;text-align:right;letter-spacing:-0.22px;">7,706</div>
<div class="t" style="top:280.9px;font-size:7.5px;line-height:10.5px;color:#444;left:551.5px;">粗利益</div>
<div class="t" style="top:280.91px;font-size:7.6px;line-height:10.64px;color:#333;left:364.6px;width:300px;text-align:right;letter-spacing:-0.22px;">35,464</div>
<div class="t" style="top:280.91px;font-size:7.6px;line-height:10.64px;color:#333;left:399.35px;width:300px;text-align:right;letter-spacing:-0.22px;">2,030</div>
<div class="t" style="top:300.4px;font-size:7.5px;line-height:10.5px;color:#444;left:551.5px;">利益率</div>
<div class="t" style="top:300.41px;font-size:7.6px;line-height:10.64px;color:#333;left:364.6px;width:300px;text-align:right;letter-spacing:-0.22px;">21.6%</div>
<div class="t" style="top:300.41px;font-size:7.6px;line-height:10.64px;color:#333;left:399.35px;width:300px;text-align:right;letter-spacing:-0.22px;">0.2%</div>
<div class="t" style="top:320.05px;font-size:7.5px;line-height:10.5px;color:#444;left:551.5px;">原価合計</div>
<div class="t" style="top:320.06px;font-size:7.6px;line-height:10.64px;color:#333;left:364.6px;width:300px;text-align:right;letter-spacing:-0.22px;">128,040</div>
<div class="t" style="top:320.06px;font-size:7.6px;line-height:10.64px;color:#333;left:399.35px;width:300px;text-align:right;letter-spacing:-0.22px;">5,677</div>
<div class="t" style="top:339.58px;font-size:7.5px;line-height:10.5px;color:#444;left:579px;">人件費</div>
<div class="t" style="top:339.58px;font-size:7.6px;line-height:10.64px;color:#333;left:364.6px;width:300px;text-align:right;letter-spacing:-0.22px;">28,828</div>
<div class="t" style="top:339.58px;font-size:7.6px;line-height:10.64px;color:#333;left:399.35px;width:300px;text-align:right;letter-spacing:-0.22px;">368</div>
<div class="t" style="top:359.08px;font-size:7.5px;line-height:10.5px;color:#444;left:579px;">外注費</div>
<div class="t" style="top:359.08px;font-size:7.6px;line-height:10.64px;color:#333;left:364.6px;width:300px;text-align:right;letter-spacing:-0.22px;">94,056</div>
<div class="t" style="top:359.08px;font-size:7.6px;line-height:10.64px;color:#333;left:399.35px;width:300px;text-align:right;letter-spacing:-0.22px;">5,322</div>
<div class="t" style="top:378.62px;font-size:7.5px;line-height:10.5px;color:#444;left:579px;">仕入費</div>
<div class="t" style="top:378.63px;font-size:7.6px;line-height:10.64px;color:#333;left:364.6px;width:300px;text-align:right;letter-spacing:-0.22px;">0</div>
<div class="t" style="top:378.63px;font-size:7.6px;line-height:10.64px;color:#333;left:399.35px;width:300px;text-align:right;letter-spacing:-0.22px;">±0</div>
<div class="t" style="top:398.12px;font-size:7.5px;line-height:10.5px;color:#444;left:579px;">その他経費</div>
<div class="t" style="top:398.13px;font-size:7.6px;line-height:10.64px;color:#333;left:364.6px;width:300px;text-align:right;letter-spacing:-0.22px;">74</div>
<div class="t" style="top:398.13px;font-size:7.6px;line-height:10.64px;color:#333;left:399.35px;width:300px;text-align:right;letter-spacing:-0.22px;">9</div>
<div class="t" style="top:417.58px;font-size:7.5px;line-height:10.5px;color:#444;left:579px;">間接原価</div>
<div class="t" style="top:417.58px;font-size:7.6px;line-height:10.64px;color:#333;left:364.6px;width:300px;text-align:right;letter-spacing:-0.22px;">5,079</div>
<div class="t" style="top:417.58px;font-size:7.6px;line-height:10.64px;color:#e8566a;left:399.35px;width:300px;text-align:right;letter-spacing:-0.22px;">-24</div>
<div class="t" style="top:437.03px;font-size:7.5px;line-height:10.5px;color:#444;left:579px;">予備費</div>
<div class="t" style="top:437.03px;font-size:7.6px;line-height:10.64px;color:#333;left:364.6px;width:300px;text-align:right;letter-spacing:-0.22px;">0</div>
<div class="t" style="top:437.03px;font-size:7.6px;line-height:10.64px;color:#333;left:399.35px;width:300px;text-align:right;letter-spacing:-0.22px;">±0</div>
<div class="t" style="top:456.38px;font-size:7.5px;line-height:10.5px;color:#444;left:579px;">仕掛高</div>
<div class="t" style="top:456.38px;font-size:7.6px;line-height:10.64px;color:#333;left:364.6px;width:300px;text-align:right;letter-spacing:-0.22px;">3</div>
<div class="t" style="top:456.38px;font-size:7.6px;line-height:10.64px;color:#333;left:399.35px;width:300px;text-align:right;letter-spacing:-0.22px;">2</div>
<div class="t" style="top:398.98px;font-size:7.5px;line-height:10.5px;color:#444;left:551.5px;">内訳</div>
</div>
</body></html>
